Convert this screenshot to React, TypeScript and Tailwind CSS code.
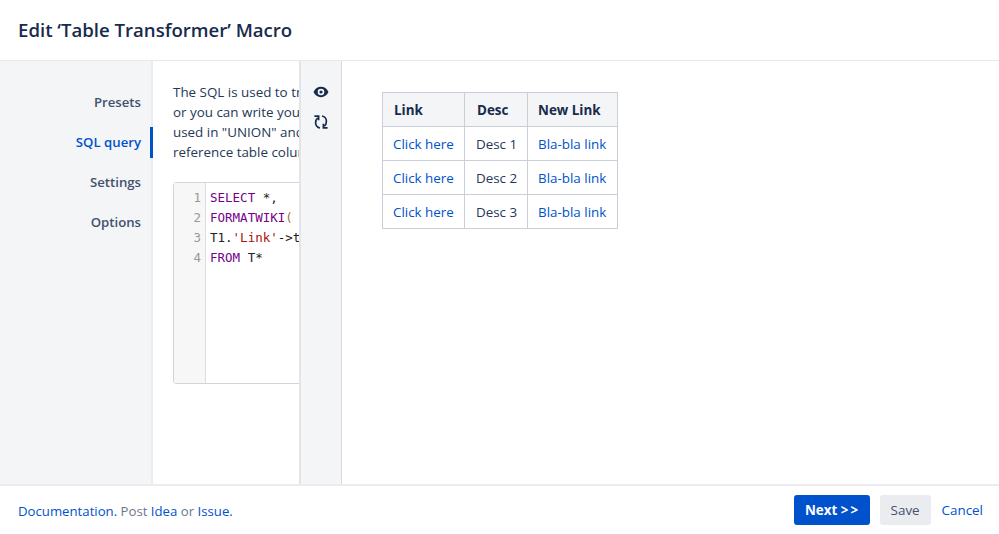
const tabs = ['Presets', 'SQL query', 'Settings', 'Options'];

const rows = [
  ['Click here', 'Desc 1', 'Bla-bla link'],
  ['Click here', 'Desc 2', 'Bla-bla link'],
  ['Click here', 'Desc 3', 'Bla-bla link'],
];

function Eye() {
  return (
    <svg width="16" height="12" viewBox="0 0 16 12" className="text-[#172b4d]">
      <path
        fill="currentColor"
        fillRule="evenodd"
        d="M0.5 6C2 2.6 4.8 0.8 8 0.8S14 2.6 15.5 6C14 9.4 11.2 11.2 8 11.2S2 9.4 0.5 6ZM8 9.3a3.3 3.3 0 1 0 0-6.6 3.3 3.3 0 0 0 0 6.6ZM8 7.6a1.6 1.6 0 1 1 0-3.2 1.6 1.6 0 0 1 0 3.2Z"
      />
    </svg>
  );
}

// two open half circles, arrow heads top left and bottom right
function Sync() {
  return (
    <svg width="16" height="16" viewBox="0 0 16 16" fill="none" stroke="#172b4d" strokeWidth="1.7" className="mt-[16px]">
      <path d="M7 14C4.4 13.6 2.6 11.2 2.6 8.6C2.6 6.6 3.4 5 4.8 3.8" />
      <path d="M1.4 2.2H5.6V6.2" />
      <path d="M9 2C11.6 2.4 13.4 4.8 13.4 7.4C13.4 9.4 12.6 11 11.2 12.2" />
      <path d="M14.6 13.8H10.4V9.8" />
    </svg>
  );
}

export default function App() {
  return (
    <div className="flex h-[534px] w-[999px] flex-col overflow-hidden bg-white font-['Open_Sans',sans-serif] text-[13.4px] text-[#172b4d]">
      {/* Header */}
      <div className="flex h-[61px] shrink-0 items-center border-b border-[#e6e8ec] px-[18px]">
        <h1 className="text-[18.6px] font-semibold">Edit ‘Table Transformer’ Macro</h1>
      </div>

      <div className="flex min-h-0 flex-1">
        {/* Tabs */}
        <div className="w-[153px] shrink-0 border-r-2 border-[#ebecf0] bg-[#f4f5f7] pt-[21px] text-right text-[13.2px] font-semibold text-[#42526e]">
          {tabs.map((tab) => (
            <div
              key={tab}
              className={
                tab === 'SQL query'
                  ? 'relative flex h-[40px] items-center justify-end pr-[10px] pt-[2px] text-[#0052cc]'
                  : 'flex h-[40px] items-center justify-end pr-[10px] pt-[1px]'
              }
            >
              {tab}
              {tab === 'SQL query' && (
                <span className="absolute -right-[2px] top-[5px] h-[31px] w-[3px] bg-[#0052cc]" />
              )}
            </div>
          ))}
        </div>

        {/* SQL pane, cut off by the preview */}
        <div className="w-[146px] shrink-0 overflow-hidden pl-[20px] pt-[21px]">
          <div className="w-[500px] leading-[20px] text-[#253858]">
            <p>The SQL is used to transform tables,</p>
            <p>or you can write your own query</p>
            <p>used in "UNION" and "JOIN" queries</p>
            <p>reference table columns by name.</p>
          </div>
          <div className="mt-[20px] flex h-[202px] w-[500px] rounded-[3px] border border-[#d3d5da] font-['DejaVu_Sans_Mono',monospace] text-[12.5px] leading-[20px]">
            <div className="w-[32px] shrink-0 border-r border-[#dcdee2] bg-[#f7f7f7] pr-[4px] pt-[5px] text-right text-[#999]">
              <div>1</div>
              <div>2</div>
              <div>3</div>
              <div>4</div>
            </div>
            <div className="pl-[4px] pt-[5px] text-[#222]">
              <div><span className="text-[#770088]">SELECT</span> *,</div>
              <div><span className="text-[#770088]">FORMATWIKI</span><span className="text-[#997744]">(</span></div>
              <div>T1.<span className="text-[#aa1111]">'Link'</span>-&gt;toString()</div>
              <div><span className="text-[#770088]">FROM</span> T*</div>
            </div>
          </div>
        </div>

        {/* Preview toolbar */}
        <div className="flex w-[43px] shrink-0 flex-col items-center border-l-2 border-r border-l-[#e3e4e8] border-r-[#d8dae0] bg-[#f4f5f7] pt-[25px]">
          <Eye />
          <Sync />
        </div>

        {/* Preview */}
        <div className="flex-1 pl-[40px] pt-[31px]">
          <table className="border-collapse text-[#253858]">
            <thead>
              <tr className="h-[34px] bg-[#f4f5f7] text-left font-bold text-[#172b4d]">
                <th className="w-[82px] border border-[#c9ced8] pl-[11px] pt-[1px]">Link</th>
                <th className="w-[63px] border border-[#c9ced8] pl-[12px] pt-[1px]">Desc</th>
                <th className="w-[90px] border border-[#c9ced8] pl-[10px] pt-[1px]">New Link</th>
              </tr>
            </thead>
            <tbody>
              {rows.map((row) => (
                <tr key={row[1]} className="h-[34px]">
                  <td className="border border-[#c9ced8] pl-[10px] pt-[1px] text-[#0052cc]">{row[0]}</td>
                  <td className="border border-[#c9ced8] pl-[11px] pt-[1px]">{row[1]}</td>
                  <td className="border border-[#c9ced8] pl-[10px] pt-[1px] text-[#0052cc]">{row[2]}</td>
                </tr>
              ))}
            </tbody>
          </table>
        </div>
      </div>

      {/* Footer */}
      <div className="flex h-[50px] shrink-0 items-center justify-between border-t-2 border-[#ebecf0] pl-[18px] pr-[16px]">
        <p className="pt-[3px] text-[13.2px] text-[#6b778c]">
          <a className="text-[#0052cc]">Documentation.</a> Post <a className="text-[#0052cc]">Idea</a> or{' '}
          <a className="text-[#0052cc]">Issue.</a>
        </p>
        <div className="flex items-center">
          <button className="h-[30px] w-[76px] rounded-[3px] bg-[#0052cc] font-bold text-white">Next &gt;&#8201;&gt;</button>
          <button className="ml-[10px] h-[30px] w-[51px] rounded-[3px] bg-[#ebecf0] text-[#42526e]">Save</button>
          <a className="ml-[11px] text-[#0052cc]">Cancel</a>
        </div>
      </div>
    </div>
  );
}
